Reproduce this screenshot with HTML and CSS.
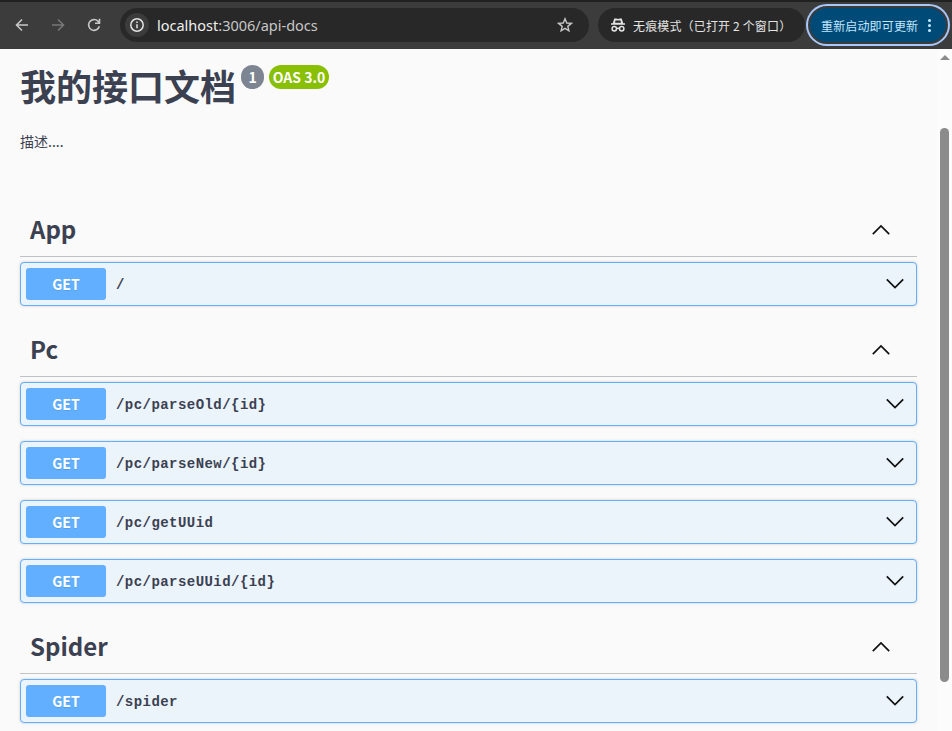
FILE: index.html
```html
<!DOCTYPE html>
<html lang="zh-CN">
<head>
<meta charset="utf-8">
<title>我的接口文档</title>
<link rel="stylesheet" href="styles.css">
</head>
<body>
<svg class="defs" width="0" height="0">
  <symbol id="up" viewBox="0 0 20 20"><path d="M1.8 14.2 10 6l8.200 8.200"/></symbol>
  <symbol id="down" viewBox="0 0 20 20"><path d="M1.800 5.300 10 13.500l8.200-8.200"/></symbol>
</svg>
<header class="toolbar">
  <div class="tab-edge left"></div>
  <div class="tab-edge right"></div>
  <nav class="nav">
    <svg class="nav-icon" viewBox="0 0 16 16"><path d="M14 8H2.800M8 2.500 2.500 8 8 13.500"/></svg>
    <svg class="nav-icon muted" viewBox="0 0 16 16"><path d="M2 8h11.200M8 2.500 13.500 8 8 13.500"/></svg>
    <svg class="nav-icon" viewBox="0 0 16 16"><path d="M13.300 9.200A5.400 5.400 0 1 1 12 4.300l1.300 1.500M13.500 1.800V6.300H9"/></svg>
  </nav>
  <div class="address">
    <span class="info"><svg viewBox="0 0 16 16"><circle cx="8" cy="8" r="6.200"/><path d="M8 7.300v4M8 4.500v1.600"/></svg></span>
    <span class="url"><b>localhost</b>:3006/api-docs</span>
    <svg class="star" viewBox="0 0 16 16"><path d="m8 1.800 1.750 4.250 4.550.35-3.500 2.950 1.100 4.500L8 11.400l-3.900 2.450 1.100-4.500-3.500-2.950 4.550-.35z"/></svg>
  </div>
  <div class="incognito">
    <svg viewBox="0 0 16 16"><path class="solid" d="M4.200 1.500h2.200L8 2l1.600-.5h2.200l1.400 4.700H15v1.600H1V6.200h1.800z"/><path class="cut" d="M5 5.800 5.500 3.400h5L11 5.800z"/><circle cx="4.300" cy="11.800" r="2.200"/><circle cx="11.700" cy="11.800" r="2.200"/><path d="M6.500 11.600q1.500-.8 3 0"/></svg>
    <span>无痕模式（已打开 2 个窗口）</span>
  </div>
  <div class="update"><span>重新启动即可更新</span><i class="dots"></i></div>
</header>
<div class="viewport">
  <main class="docs">
    <div class="title"><h1>我的接口文档</h1><span class="badge version">1</span><span class="badge oas">OAS 3.0</span></div>
    <p class="description">描述....</p>

    <section class="group">
      <h2>App<svg class="arrow"><use href="#up"/></svg></h2>
      <div class="operation"><span class="method">GET</span><span class="path">/</span><svg class="arrow"><use href="#down"/></svg></div>
    </section>

    <section class="group">
      <h2>Pc<svg class="arrow"><use href="#up"/></svg></h2>
      <div class="operation"><span class="method">GET</span><span class="path">/pc/parseOld/{id}</span><svg class="arrow"><use href="#down"/></svg></div>
      <div class="operation"><span class="method">GET</span><span class="path">/pc/parseNew/{id}</span><svg class="arrow"><use href="#down"/></svg></div>
      <div class="operation"><span class="method">GET</span><span class="path">/pc/getUUid</span><svg class="arrow"><use href="#down"/></svg></div>
      <div class="operation"><span class="method">GET</span><span class="path">/pc/parseUUid/{id}</span><svg class="arrow"><use href="#down"/></svg></div>
    </section>

    <section class="group">
      <h2>Spider<svg class="arrow"><use href="#up"/></svg></h2>
      <div class="operation"><span class="method">GET</span><span class="path">/spider</span><svg class="arrow"><use href="#down"/></svg></div>
    </section>
  </main>
  <aside class="scrollbar"><i class="scroll-up"></i><i class="thumb"></i></aside>
</div>
</body>
</html>
```
FILE: styles.css
```css
* { box-sizing: border-box; }
body {
  margin: 0;
  height: 731px;
  overflow: hidden;
  background: #fafafa;
  color: #3b4151;
  font-family: "Noto Sans CJK SC", sans-serif;
}
svg { fill: none; stroke: currentColor; flex: none; }
.defs { position: absolute; }

.toolbar {
  position: relative;
  display: flex;
  align-items: center;
  height: 49px;
  padding: 0 3px 1px 14px;
  background: #3c3c3c;
  color: #e3e3e3;
  border-top: 2px solid #202121;
}
.tab-edge { position: absolute; top: -2px; height: 2px; background: #202121; }
.tab-edge.left { left: 0; width: 34px; border-radius: 0 0 6px 0; }
.tab-edge.right { left: 278px; right: 0; border-radius: 0 0 0 6px; }
.nav { display: flex; gap: 20px; width: 106px; }
.nav-icon { width: 16px; height: 16px; stroke-width: 1.6; color: #c7c7c7; }
.nav-icon.muted { color: #777; }
.address {
  display: flex;
  align-items: center;
  width: 469px;
  height: 34px;
  padding: 0 16px 0 5px;
  border-radius: 17px;
  background: #282828;
}
.info {
  display: grid;
  place-items: center;
  width: 24px;
  height: 24px;
  border-radius: 50%;
  background: #3c3c3c;
}
.info svg { width: 16px; height: 16px; stroke-width: 1.5; }
.url {
  margin: -1px 0 0 8px;
  font: 14.5px/20px "Noto Sans", sans-serif;
  color: #c7c7c7;
}
.url b { font-weight: 400; color: #f0f0f0; }
.star { width: 16px; height: 16px; margin-left: auto; stroke-width: 1.4; color: #c7c7c7; }
.incognito {
  display: flex;
  align-items: center;
  width: 207px;
  height: 34px;
  margin-left: 9px;
  padding-left: 12px;
  border-radius: 17px;
  background: #282828;
  font-size: 12px;
  letter-spacing: .15px;
  white-space: nowrap;
}
.incognito svg { width: 16px; height: 16px; stroke-width: 1.5; margin-right: 7px; }
.solid { fill: currentColor; stroke: none; }
.cut { fill: #282828; stroke: none; }
.update {
  display: flex;
  align-items: center;
  flex: none;
  width: 140px;
  height: 38px;
  margin-left: 3px;
  padding-left: 11px;
  border-radius: 19px;
  background: #004a77;
  border: 2px solid #3c3c3c;
  box-shadow: 0 0 0 2px #a8c7fa;
  color: #c2e7ff;
  font-size: 12px;
  letter-spacing: .15px;
  white-space: nowrap;
}
.dots {
  width: 3px;
  height: 3px;
  margin-left: 10px;
  background: currentColor;
  border-radius: 50%;
  box-shadow: 0 -5px currentColor, 0 5px currentColor;
}

.viewport { display: flex; justify-content: space-between; height: 682px; }
.docs { width: 917px; padding-left: 20px; }
.title { display: flex; height: 78px; padding-top: 16px; }
h1 { margin: -2px 0 0; font-size: 36px; line-height: 44px; font-weight: 700; }
.badge {
  height: 24px;
  border-radius: 12px;
  color: #fff;
  font-size: 14px;
  line-height: 24px;
  font-weight: 700;
  text-align: center;
}
.version { width: 23px; margin-left: 5px; background: #7d8492; }
.oas { width: 60px; margin-left: 5px; background: #89bf04; }
.description { margin: 3px 0 47px; font-size: 14px; line-height: 22px; }

.group { margin-bottom: 13px; }
h2 {
  display: flex;
  justify-content: space-between;
  align-items: center;
  height: 58px;
  margin: 0 0 5px;
  padding: 2px 26px 0 10px;
  border-bottom: 1px solid rgba(59, 65, 81, .3);
  font-size: 24px;
  line-height: 36px;
  font-weight: 700;
}
h2 .arrow { margin-top: 2px; }
.arrow { width: 20px; height: 20px; color: #111; stroke-width: 1.7; }
.operation {
  display: flex;
  align-items: center;
  height: 44px;
  padding: 0 11px 0 5px;
  border: 1px solid #61affe;
  border-radius: 4px;
  background: #ebf3fb;
  box-shadow: 0 0 3px rgba(0, 0, 0, .19);
}
.operation + .operation { margin-top: 15px; }
.method {
  width: 80px;
  height: 32px;
  border-radius: 3px;
  background: #61affe;
  color: #fff;
  font-size: 14px;
  line-height: 33px;
  font-weight: 700;
  text-align: center;
  text-shadow: 0 1px 0 rgba(0, 0, 0, .1);
}
.path {
  flex: 1;
  padding: 2px 0 0 10px;
  font: 700 14px/20px "Liberation Mono", monospace;
  letter-spacing: .45px;
}
.scrollbar { position: relative; width: 15px; background: #fcfcfc; }
.scroll-up {
  position: absolute;
  top: 6px;
  left: 3px;
  border: solid transparent;
  border-width: 0 5px 5px;
  border-bottom-color: #8b8b8b;
}
.thumb { position: absolute; top: 79px; left: 3px; width: 9px; height: 554px; border-radius: 5px; background: #8b8b8b; }
```
